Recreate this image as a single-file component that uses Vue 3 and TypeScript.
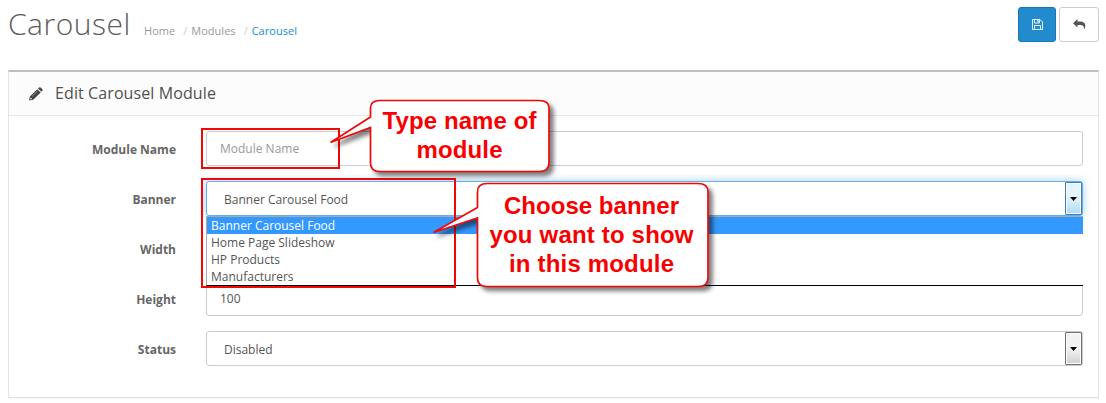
<script setup lang="ts">
import { ref } from 'vue'

interface Callout {
  path: string
  x: number
  lines: { text: string; y: number; width: number }[]
}

const crumbs = ['Home', 'Modules', 'Carousel']
const banners = ['Banner Carousel Food', 'Home Page Slideshow', 'HP Products', 'Manufacturers']
const banner = ref(banners[0])
const status = ref('Disabled')
const moduleName = ref('')
const height = ref('100')

const callouts: Callout[] = [
  {
    path: 'M380 100.5H539Q549 100.5 549 108V163Q549 171.5 539 171.5H380Q370.5 171.5 370.5 163V127.5L330.5 142.5L370.5 117V108Q370.5 100.5 380 100.5Z',
    x: 459.5,
    lines: [
      { text: 'Type name of', y: 129, width: 154 },
      { text: 'module', y: 158, width: 86 },
    ],
  },
  {
    path: 'M487 183.5H698Q708 183.5 708 192V278Q708 286.5 698 286.5H487Q477.5 286.5 477.5 278V218L433.5 232.5L477.5 207.5V192Q477.5 183.5 487 183.5Z',
    x: 591.5,
    lines: [
      { text: 'Choose banner', y: 214, width: 175 },
      { text: 'you want to show', y: 243, width: 204 },
      { text: 'in this module', y: 272, width: 165 },
    ],
  },
]
</script>

<template>
  <div class="page">
    <header class="top">
      <h1>Carousel</h1>
      <nav class="crumbs">
        <template v-for="(c, i) in crumbs" :key="c">
          <span v-if="i" class="sep">/</span>
          <a :class="{ current: i === crumbs.length - 1 }">{{ c }}</a>
        </template>
      </nav>
      <div class="actions">
        <button class="btn primary" aria-label="Save">
          <svg width="11" height="11" viewBox="0 0 11 11" fill="none" stroke="#e4f2fb" stroke-width="1">
            <path d="M.5.5H8L10.500 3V10.500H.5Z" />
            <path d="M2.500.5V4H7.500V.5M2.500 10.500V6.500H8.500V10.500" />
            <path d="M6 1V3.500" stroke-width="1.300" />
          </svg>
        </button>
        <button class="btn" aria-label="Back">
          <svg width="13" height="11" viewBox="0 0 13 11">
            <path d="M0 4.200L4.500 0V2.500H6.500C10.500 2.500 12.500 4 12.300 7.200C12.200 8.500 11.600 9.700 11 10.500C11.300 7 10 5.900 6.500 5.900H4.500V8.400Z" fill="#555" />
          </svg>
        </button>
      </div>
    </header>

    <section class="panel">
      <div class="heading">
        <svg width="14" height="14" viewBox="0 0 14 14">
          <path d="M0 13.500L.9 9.600L8.300 2.200L11.700 5.500L4.200 12.800ZM9 1.500L10.200.4Q10.900-.1 11.600.5L13.400 2.300Q14 3 13.400 3.700L12.300 4.800Z" fill="#444" />
          <path d="M1.600 10.500L1.200 12.400L3.200 12Z" fill="#fcfcfc" />
          <path d="M3 9.500L8.500 4.100" stroke="#aaa" stroke-width=".7" />
        </svg>
        <h3>Edit Carousel Module</h3>
      </div>
      <form class="body">
        <label>Module Name</label>
        <div class="field"><input v-model="moduleName" placeholder="Module Name" /></div>

        <label>Banner</label>
        <div class="field">
          <div class="select focus">
            <span>{{ banner }}</span>
            <i class="drop"><svg width="7" height="4"><path d="M0 0H7L3.500 4Z" /></svg></i>
          </div>
          <ul class="menu">
            <li v-for="b in banners" :key="b" :class="{ active: b === banner }">{{ b }}</li>
          </ul>
        </div>

        <label>Width</label>
        <div class="field"><input /></div>

        <label>Height</label>
        <div class="field"><input v-model="height" /></div>

        <label>Status</label>
        <div class="field">
          <div class="select">
            <span>{{ status }}</span>
            <i class="drop"><svg width="7" height="4"><path d="M0 0H7L3.500 4Z" /></svg></i>
          </div>
        </div>
      </form>
    </section>

    <svg class="notes" width="1106" height="403" viewBox="0 0 1106 403">
      <g fill="none" stroke="#f00808" stroke-width="2">
        <rect x="202" y="129" width="137" height="39" />
        <rect x="202" y="179" width="253" height="108" />
      </g>
      <g v-for="c in callouts" :key="c.path">
        <path class="bubble" :d="c.path" />
        <text v-for="l in c.lines" :key="l.text" :x="c.x" :y="l.y" :textLength="l.width">{{ l.text }}</text>
      </g>
    </svg>
  </div>
</template>

<style>
body {
  background: #fff;
}
</style>

<style scoped>
* {
  box-sizing: border-box;
}
.page {
  position: relative;
  width: 1106px;
  height: 403px;
  padding: 7px 7px 0 8px;
  overflow: hidden;
  background: #fff;
  font: 12px 'Open Sans', sans-serif;
  color: #555;
}
.top {
  display: flex;
  height: 63px;
  align-items: flex-start;
}
h1 {
  margin: 0;
  width: 136px;
  font-size: 30px;
  line-height: 34px;
  font-weight: 300;
  letter-spacing: 0.5px;
  color: #5c5c5c;
  white-space: nowrap;
}
.crumbs {
  display: flex;
  padding-top: 16px;
  line-height: 16px;
  font-size: 11px;
  letter-spacing: 0.03px;
  color: #999;
}
.sep {
  width: 16px;
  padding-left: 8px;
  color: #ccc;
}
.current {
  color: #1290d8;
}
.actions {
  display: flex;
  gap: 3px;
  margin-left: auto;
}
.btn {
  display: flex;
  align-items: center;
  justify-content: center;
  width: 40px;
  height: 35px;
  padding: 0;
  border: 1px solid #ccc;
  border-radius: 3px;
  background: #fff;
}
.primary {
  width: 38px;
  background: #228bcd;
  border-color: #1978b4;
}
.panel {
  height: 328px;
  border: 1px solid #e4e4e4;
  border-top: 2px solid #bfbfbf;
  box-shadow: 0 1px 1px rgba(0, 0, 0, 0.04);
}
.heading {
  display: flex;
  align-items: center;
  gap: 12px;
  height: 44px;
  padding-left: 20px;
  border-bottom: 1px solid #e8e8e8;
  background: #fcfcfc;
}
h3 {
  margin: 0;
  padding-bottom: 2px;
  font-size: 16px;
  font-weight: 400;
  letter-spacing: 0.1px;
  color: #505050;
}
.body {
  display: grid;
  grid-template-columns: 167px 877px;
  grid-auto-rows: 35px;
  gap: 15px 30px;
  padding-top: 15px;
}
label {
  padding-top: 2px;
  line-height: 34px;
  text-align: right;
  font-weight: 700;
  color: #666;
}
.field {
  position: relative;
}
input,
.select {
  display: block;
  width: 100%;
  height: 35px;
  border: 1px solid #ccc;
  border-radius: 3px;
  background: #fff;
  font: 12px/33px 'Open Sans', sans-serif;
  color: #555;
}
input {
  padding: 0 13px;
  outline: none;
}
input::placeholder {
  color: #999;
}
.select {
  display: flex;
  justify-content: space-between;
  padding: 0 0 0 17px;
}
.select span {
  padding-top: 1px;
}
.focus {
  border-color: #66afe9;
  box-shadow: 0 0 8px rgba(102, 175, 233, 0.6);
}
.drop {
  display: flex;
  align-items: center;
  justify-content: center;
  width: 17px;
  height: 33px;
  border: 1px solid #707070;
  border-radius: 1px;
  box-shadow: inset 0 0 0 1px #fff;
  background: linear-gradient(#f2f2f2 50%, #d0d0d0);
}
.focus .drop {
  border-color: #3c7fb1;
  background: linear-gradient(#e3f4fc 48%, #a9daf5);
}
.menu {
  position: absolute;
  z-index: 2;
  top: 35px;
  left: 0;
  width: 877px;
  height: 70px;
  margin: 0;
  padding: 0;
  list-style: none;
  background: #fff;
  border: 1px solid #aaa;
  border-right: 0;
  border-bottom-color: #000;
}
.menu li {
  height: 17px;
  padding-left: 4px;
  line-height: 17px;
}
.menu .active {
  background: #3399ff;
  color: #fff;
}
.notes {
  position: absolute;
  z-index: 3;
  top: 0;
  left: 0;
}
.bubble {
  fill: #fff;
  stroke: #f00808;
  stroke-width: 1.7;
  filter: drop-shadow(4px 4px 2px rgba(0, 0, 0, 0.5));
}
text {
  font: bold 24px 'Liberation Sans', Arial, sans-serif;
  fill: #f80000;
  text-anchor: middle;
}
</style>
